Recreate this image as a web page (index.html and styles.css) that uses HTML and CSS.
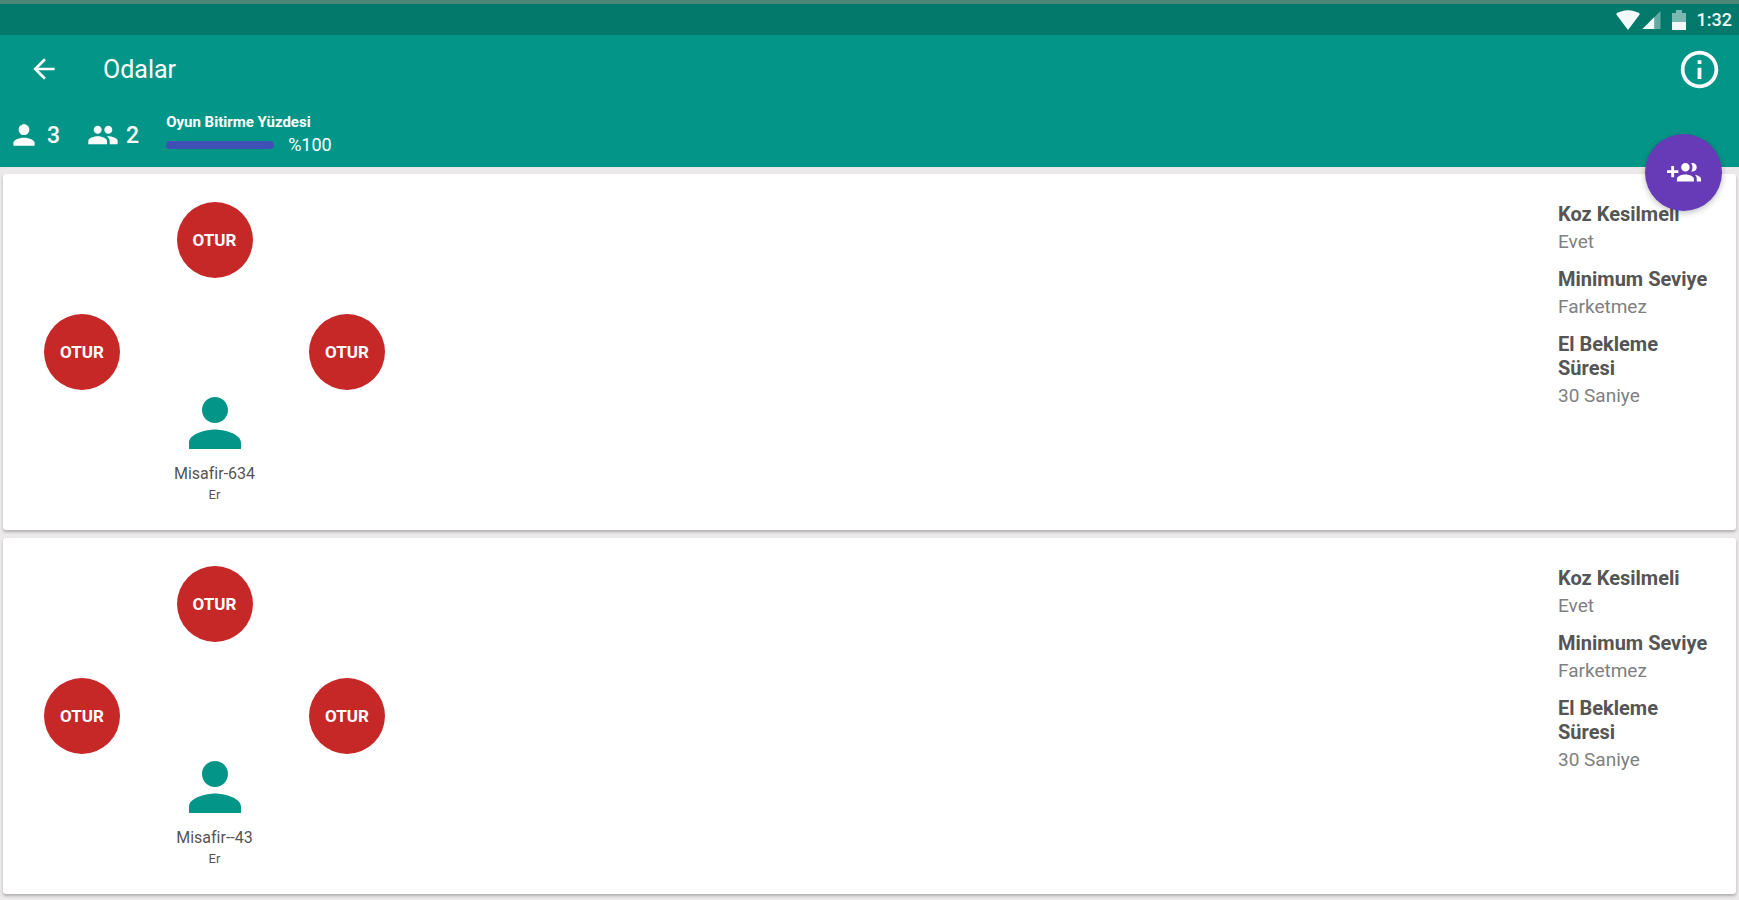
FILE: index.html
```html
<!DOCTYPE html>
<html lang="tr">
<head>
    <meta charset="UTF-8">
    <meta name="viewport" content="width=device-width, initial-scale=1.0">
    <title>Odalar</title>
    <link rel="stylesheet" href="styles.css">
</head>
<body>

    <svg class="symbols" aria-hidden="true">
        <symbol id="person" viewBox="0 0 24 24">
            <path d="M12 12c2.21 0 4-1.79 4-4s-1.79-4-4-4-4 1.79-4 4 1.79 4 4 4zm0 2c-2.67 0-8 1.34-8 4v2h16v-2c0-2.66-5.33-4-8-4z"/>
        </symbol>
    </svg>

    <div class="status-bar">
        <svg class="wifi" viewBox="0 0 24 20"><path d="M0 4C7-1 17-1 24 4L12 20z"/></svg>
        <svg class="signal" viewBox="0 0 20 20"><path opacity=".4" d="M0 20L20 0v20z"/><path d="M0 20L13 7v13z"/></svg>
        <svg class="battery" viewBox="0 0 14 20"><path opacity=".5" d="M4 0h6v3h4v10H0V3h4z"/><path d="M0 12h14v8H0z"/></svg>
        <span>1:32</span>
    </div>

    <header>
        <div class="toolbar">
            <button class="icon-button" aria-label="Geri">
                <svg class="back" viewBox="0 0 24 24"><path d="M20 11H7.83l5.59-5.59L12 4l-8 8 8 8 1.41-1.41L7.83 13H20v-2z"/></svg>
            </button>
            <h1>Odalar</h1>
            <button class="icon-button" aria-label="Bilgi">
                <svg class="info" viewBox="0 0 24 24"><path d="M11 17h2v-6h-2v6zm1-15C6.48 2 2 6.48 2 12s4.48 10 10 10 10-4.48 10-10S17.52 2 12 2zm0 18c-4.41 0-8-3.59-8-8s3.59-8 8-8 8 3.59 8 8-3.59 8-8 8zM11 9h2V7h-2v2z"/></svg>
            </button>
        </div>
        <div class="stats">
            <div class="stat">
                <svg class="stat-icon" viewBox="0 0 24 24"><use href="#person"/></svg>
                <span>3</span>
            </div>
            <div class="stat">
                <svg class="stat-icon" viewBox="0 0 24 24"><path d="M16 11c1.66 0 2.99-1.34 2.99-3S17.66 5 16 5s-3 1.34-3 3 1.34 3 3 3zm-8 0c1.66 0 2.99-1.34 2.99-3S9.66 5 8 5 5 6.34 5 8s1.34 3 3 3zm0 2c-2.33 0-7 1.17-7 3.5V19h14v-2.5c0-2.33-4.67-3.5-7-3.5zm8 0c-.29 0-.62.02-.97.05 1.16.84 1.97 1.97 1.97 3.45V19h6v-2.5c0-2.33-4.67-3.5-7-3.5z"/></svg>
                <span>2</span>
            </div>
            <div class="finish-rate">
                <label for="rate">Oyun Bitirme Yüzdesi</label>
                <div class="rate-row">
                    <progress id="rate" max="100" value="100"></progress>
                    <span>%100</span>
                </div>
            </div>
        </div>
        <button class="fab" aria-label="Oda ekle">
            <svg viewBox="0 0 24 24"><path d="M8 10H5V7H3v3H0v2h3v3h2v-3h3v-2zm10 1c1.66 0 2.99-1.34 2.99-3S19.66 5 18 5c-.32 0-.63.05-.91.14.57.81.9 1.79.9 2.86s-.34 2.04-.9 2.86c.28.09.59.14.91.14zm-5 0c1.66 0 2.99-1.34 2.99-3S14.66 5 13 5s-3 1.34-3 3 1.34 3 3 3zm6.62 2.16c.83.73 1.38 1.66 1.38 2.84v2h3v-2c0-1.54-2.37-2.49-4.38-2.84zM13 13c-2 0-6 1-6 3v2h12v-2c0-2-4-3-6-3z"/></svg>
        </button>
    </header>

    <main>
        <section class="room">
            <div class="table">
                <button class="seat top">OTUR</button>
                <button class="seat left">OTUR</button>
                <button class="seat right">OTUR</button>
                <div class="player">
                    <svg viewBox="0 0 24 24"><use href="#person"/></svg>
                    <span class="name">Misafir-634</span>
                    <span class="rank">Er</span>
                </div>
            </div>
            <dl class="rules">
                <dt>Koz Kesilmeli</dt>
                <dd>Evet</dd>
                <dt>Minimum Seviye</dt>
                <dd>Farketmez</dd>
                <dt>El Bekleme Süresi</dt>
                <dd>30 Saniye</dd>
            </dl>
        </section>

        <section class="room">
            <div class="table">
                <button class="seat top">OTUR</button>
                <button class="seat left">OTUR</button>
                <button class="seat right">OTUR</button>
                <div class="player">
                    <svg viewBox="0 0 24 24"><use href="#person"/></svg>
                    <span class="name">Misafir--43</span>
                    <span class="rank">Er</span>
                </div>
            </div>
            <dl class="rules">
                <dt>Koz Kesilmeli</dt>
                <dd>Evet</dd>
                <dt>Minimum Seviye</dt>
                <dd>Farketmez</dd>
                <dt>El Bekleme Süresi</dt>
                <dd>30 Saniye</dd>
            </dl>
        </section>
    </main>

</body>
</html>
```
FILE: styles.css
```css
* {
    box-sizing: border-box;
}
body {
    font-family: Roboto, sans-serif;
    margin: 0;
    background-color: #ebe9e9;
}
button {
    border: none;
    padding: 0;
    background: none;
    font-family: inherit;
    cursor: pointer;
}
svg {
    display: block;
    fill: currentColor;
}
.symbols {
    display: none;
}
.status-bar {
    display: flex;
    justify-content: flex-end;
    align-items: center;
    height: 35px;
    padding-right: 7px;
    border-top: 4px solid #4d8576;
    background: #03796b;
    color: #f2faf9;
    font-size: 18px;
    font-weight: 500;
}
.wifi {
    width: 24px;
    height: 20px;
}
.signal {
    width: 19px;
    height: 18px;
    margin-left: 2px;
}
.battery {
    width: 14px;
    height: 20px;
    margin: 0 11px;
}
header {
    position: relative;
    background: #039688;
    color: #fff;
}
.toolbar {
    display: flex;
    align-items: center;
    height: 68px;
    padding: 0 17px 0 28px;
}
.toolbar h1 {
    flex: 1;
    margin: 0 0 0 43px;
    font-size: 25px;
    font-weight: 400;
}
.icon-button {
    color: inherit;
}
.back {
    width: 32px;
    height: 32px;
}
.info {
    width: 45px;
    height: 45px;
}
.stats {
    display: flex;
    height: 64px;
    padding-left: 8px;
}
.stat {
    display: flex;
    align-items: center;
    gap: 7px;
    height: 64px;
    margin-right: 27px;
    font-size: 23px;
    font-weight: 500;
}
.stat-icon {
    width: 32px;
    height: 32px;
}
.finish-rate {
    display: flex;
    flex-direction: column;
    padding-top: 10px;
}
.finish-rate label {
    font-size: 15px;
    font-weight: 700;
    line-height: 18px;
}
.rate-row {
    display: flex;
    align-items: center;
    gap: 14px;
    font-size: 18px;
    line-height: 28px;
}
progress {
    width: 108px;
    height: 8px;
    border: none;
    border-radius: 4px;
    overflow: hidden;
    appearance: none;
}
progress::-webkit-progress-bar {
    background: #037a6e;
}
progress::-webkit-progress-value {
    background: #3f51b5;
}
.fab {
    position: absolute;
    right: 17px;
    bottom: -44px;
    z-index: 1;
    width: 77px;
    height: 77px;
    border-radius: 50%;
    background: #673ab7;
    color: #fff;
    box-shadow: 0 2px 6px rgba(0,0,0,0.25);
}
.fab svg {
    width: 34px;
    height: 34px;
    margin: 0 auto;
}
main {
    display: flex;
    flex-direction: column;
    gap: 8px;
    padding: 7px 3px;
}
.room {
    display: flex;
    justify-content: space-between;
    min-height: 356px;
    padding: 28px 24px 0 41px;
    border-radius: 3px;
    background: #fff;
    box-shadow: 0 2px 3px rgba(0,0,0,0.25);
}
.table {
    display: grid;
    grid-template-columns: 76px 189px 76px;
    grid-template-rows: 76px 36px 76px auto;
    align-content: start;
    justify-items: center;
}
.seat {
    width: 76px;
    height: 76px;
    border-radius: 50%;
    background: #c62828;
    color: #fff;
    font-size: 17px;
    font-weight: 700;
}
.top {
    grid-area: 1 / 2;
}
.left {
    grid-area: 3 / 1;
}
.right {
    grid-area: 3 / 3;
}
.player {
    grid-area: 4 / 2;
    display: flex;
    flex-direction: column;
    align-items: center;
    margin-top: -6px;
    color: #555;
}
.player svg {
    width: 78px;
    height: 78px;
    color: #039688;
}
.name {
    font-size: 16px;
    line-height: 24px;
}
.rank {
    font-size: 13px;
    line-height: 18px;
}
.rules {
    width: 154px;
    margin: 0;
    color: #555;
}
.rules dt {
    font-size: 20px;
    font-weight: 700;
    line-height: 24px;
}
.rules dd {
    margin: 2px 0 12px;
    color: #808080;
    font-size: 19px;
    line-height: 27px;
}
```
